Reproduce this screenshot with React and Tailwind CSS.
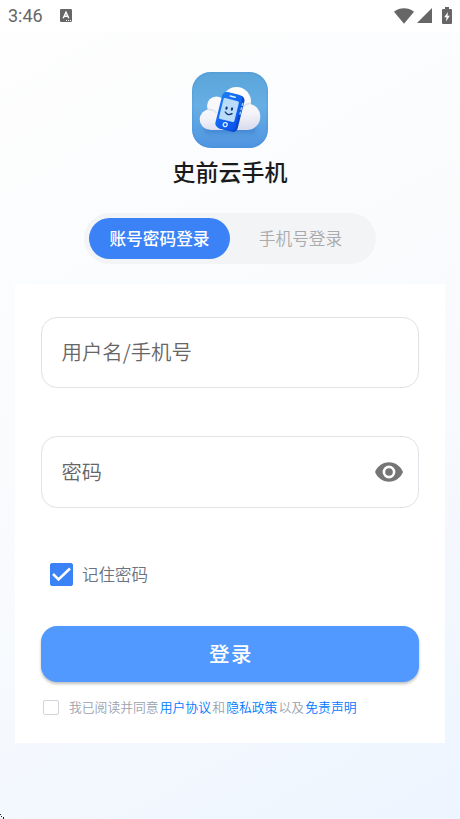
import React, { useState } from "react";

const StatusBar = () => (
  <div className="h-8 shrink-0 bg-white flex items-center justify-between pl-2 pr-2 text-[#666]">
    <div className="flex items-center">
      <span className="w-[52px] font-['Roboto',sans-serif] text-[18px] leading-8 font-[450]">3:46</span>
      <svg className="-mt-px" width="12" height="13" viewBox="0 0 12 13">
        <rect width="12" height="13" rx="1.2" fill="#666" />
        <path d="M3.2 9.3 6 3.2l2.8 6.1M4.2 7.3h3.6" fill="none" stroke="#fff" strokeWidth="1.4" />
        <path d="M6 11.5h1M8 11.5h1M10 11.5h1" stroke="#fff" strokeWidth="1" />
      </svg>
    </div>
    <div className="flex items-center -mt-px">
      <svg width="20" height="16" viewBox="0 0 20 16">
        <path d="M0 3.7C5.6-.9 14.4-.9 20 3.7L10 15.7Z" fill="#666" />
      </svg>
      <svg className="ml-[3px]" width="15" height="15" viewBox="0 0 15 15">
        <path d="M15 0v15H0Z" fill="#666" />
      </svg>
      <svg className="ml-[10px]" width="10" height="17" viewBox="0 0 10 17">
        <path d="M3 0h4v2h2q1 0 1 1v13q0 1-1 1H1q-1 0-1-1V3q0-1 1-1h2Z" fill="#666" />
        <path d="M6 5 2.2 10.3h2.3L4 14.5l3.8-5.7H5.5Z" fill="#fff" />
      </svg>
    </div>
  </div>
);

const Logo = () => (
  <svg width="76" height="76" viewBox="0 0 76 76">
    <defs>
      <linearGradient id="tile" x1="0" y1="0" x2="0" y2="1">
        <stop offset="0" stopColor="#5ba5da" />
        <stop offset="0.45" stopColor="#66aee5" />
        <stop offset="1" stopColor="#4f94e0" />
      </linearGradient>
      <linearGradient id="cloud" gradientUnits="userSpaceOnUse" x1="38" y1="15" x2="42" y2="59">
        <stop offset="0" stopColor="#fff" />
        <stop offset="0.65" stopColor="#f4f3f8" />
        <stop offset="1" stopColor="#d8dbee" />
      </linearGradient>
      <linearGradient id="phone" x1="0" y1="0" x2="1" y2="1">
        <stop offset="0" stopColor="#1c7ef6" />
        <stop offset="1" stopColor="#0a50ec" />
      </linearGradient>
      <filter id="soft" x="-20%" y="-60%" width="140%" height="260%">
        <feGaussianBlur stdDeviation="2" />
      </filter>
    </defs>
    <rect width="76" height="76" rx="18.5" fill="url(#tile)" />
    <rect x="0.8" y="0.8" width="74.4" height="74.4" rx="17.8" fill="none" stroke="#3f86cf" strokeWidth="1.2" opacity="0.25" />
    <path d="M11 54h51l2 7H14Z" fill="#3274c5" opacity="0.55" filter="url(#soft)" />
    <g fill="url(#cloud)">
      <circle cx="24.5" cy="34" r="9.5" />
      <circle cx="44.5" cy="29.5" r="14.5" />
      <circle cx="18" cy="47.5" r="10.3" />
      <circle cx="55" cy="44.7" r="13.3" />
      <rect x="18" y="34" width="37" height="24" />
    </g>
    <path d="M15.5 37.600q5.500-.8 9 3.400M58.500 31.500q-5 0-7.500 4" fill="none" stroke="#cfd7ea" strokeWidth="1.400" opacity="0.7" />
    <g transform="rotate(14 37.500 39.500)">
      <rect x="28" y="21.500" width="21.500" height="37" rx="4.500" fill="#0647cf" />
      <rect x="26.500" y="21" width="20.500" height="37" rx="4.500" fill="url(#phone)" />
      <rect x="28.700" y="27.500" width="15.800" height="21.500" rx="1.500" fill="#b9dcfa" />
      <path d="M34.500 24.300h5" stroke="#dceeff" strokeWidth="1.600" strokeLinecap="round" />
      <ellipse cx="33.800" cy="37" rx="1.100" ry="1.700" fill="#153572" />
      <ellipse cx="39.300" cy="36.500" rx="1.100" ry="1.700" fill="#153572" />
      <path d="M33.500 41q3.500 3.500 7 0" fill="none" stroke="#153572" strokeWidth="1.400" strokeLinecap="round" />
      <circle cx="36.500" cy="53.300" r="2" fill="none" stroke="#d9edff" strokeWidth="1.300" />
      <path d="M48.300 28.500v2M48.300 33v2M48.300 37.500v2" stroke="#8ecbff" strokeWidth="1.500" strokeLinecap="round" />
    </g>
  </svg>
);

const EyeIcon = () => (
  <svg width="28" height="20" viewBox="0 0 28 20">
    <path
      fillRule="evenodd"
      fill="#757575"
      d="M14 .3C7.700.3 2.300 4.300 0 10c2.300 5.700 7.700 9.700 14 9.700S25.700 15.700 28 10C25.700 4.300 20.300.3 14 .3Zm0 16.100a6.400 6.400 0 1 1 0-12.800 6.400 6.400 0 0 1 0 12.800Zm0-2.600a3.800 3.800 0 1 0 0-7.600 3.800 3.800 0 0 0 0 7.600Z"
    />
  </svg>
);

const App = () => {
  const [tab, setTab] = useState("account");
  const [username, setUsername] = useState("");
  const [password, setPassword] = useState("");
  const [visible, setVisible] = useState(false);
  const [remember, setRemember] = useState(true);
  const [agreed, setAgreed] = useState(false);

  const activeTab = "bg-[#3b82f6] text-white font-medium";
  const idleTab = "text-[#a9aaac] font-[350]";

  return (
    <div className="relative w-[460px] h-[819px] overflow-hidden flex flex-col bg-white font-['Noto_Sans_CJK_SC',sans-serif]">
      <StatusBar />
      <main className="flex-1 flex flex-col items-center bg-linear-[150deg] from-[#fefefe] via-[#f8fafd] via-55% to-[#edf5ff] pt-10">
        <Logo />
        <h1 className="mt-[6px] text-[23px] leading-[34px] font-medium text-[#1a1a1a]">史前云手机</h1>

        <div className="mt-[25px] w-[292px] h-[51px] rounded-full bg-[#f3f4f6] p-[5px] flex text-[16.7px]">
          <button className={`w-[141px] h-[41px] rounded-full ${tab === "account" ? activeTab : idleTab}`} onClick={() => setTab("account")}>账号密码登录</button>
          <button className={`w-[141px] h-[41px] rounded-full ${tab === "phone" ? activeTab : idleTab}`} onClick={() => setTab("phone")}>手机号登录</button>
        </div>

        <div className="mt-5 w-[430px] h-[459px] bg-white px-[26px] pt-[33px]">
          <div className="h-[71px] rounded-2xl border border-[#e2e2e5] pl-[19.5px] pr-5 pb-[2px] flex items-center">
            <input className="w-full font-[350] text-[20.4px] text-[#666] outline-none placeholder:text-[#666]" placeholder="用户名/手机号" value={username} onChange={(e) => setUsername(e.target.value)} />
          </div>
          <div className="mt-12 h-[72px] rounded-2xl border border-[#e2e2e8] pl-[19.5px] pr-[15.5px] flex items-center">
            <input className="flex-1 min-w-0 font-[350] text-[20.2px] text-[#666] outline-none placeholder:text-[#666]" type={visible ? "text" : "password"} placeholder="密码" value={password} onChange={(e) => setPassword(e.target.value)} />
            <button onClick={() => setVisible(!visible)}><EyeIcon /></button>
          </div>

          <button className="mt-[54px] ml-[9px] h-6 flex items-center gap-[9px]" onClick={() => setRemember(!remember)}>
            <svg width="23" height="23" viewBox="0 0 23 23">
              <rect x="0.5" y="0.5" width="22" height="22" rx="1.5" fill={remember ? "#3b82f6" : "#fff"} stroke="#3b82f6" />
              {remember && <path d="m3 11 5.500 5.500L20 5.500" fill="none" stroke="#fff" strokeWidth="2.500" />}
            </svg>
            <span className="font-[350] text-[16.5px] leading-6 text-[#6b7280]">记住密码</span>
          </button>

          <button className="mt-10 w-full h-14 rounded-2xl bg-[#5199ff] text-white text-[20.5px] font-medium tracking-[1.5px] pl-[2px] pb-[2px] shadow-[0_2px_3px_rgba(0,0,0,0.25)]">登录</button>

          <div className="mt-[15px] ml-[2px] h-5 flex items-center">
            <button className={`w-4 h-[15px] rounded-[2px] border-[1.5px] border-[#d1d5db] ${agreed ? "bg-[#3b82f6]" : "bg-white"}`} onClick={() => setAgreed(!agreed)} />
            <p className="ml-[10px] flex gap-[1.2px] font-[350] text-[12.8px] leading-5 text-[#9ca3af] whitespace-nowrap">
              <span>我已阅读并同意</span>
              <a className="text-[#007aff]">用户协议</a>
              <span>和</span>
              <a className="text-[#007aff]">隐私政策</a>
              <span>以及</span>
              <a className="text-[#007aff]">免责声明</a>
            </p>
          </div>
        </div>
      </main>
      <svg className="absolute left-0 bottom-0" width="5" height="5" viewBox="0 0 5 5">
        <path d="M0 0h1v1H0ZM1 2h1v1H1ZM3 3h1v2H3Z" fill="#222" />
      </svg>
    </div>
  );
};

export default App;
